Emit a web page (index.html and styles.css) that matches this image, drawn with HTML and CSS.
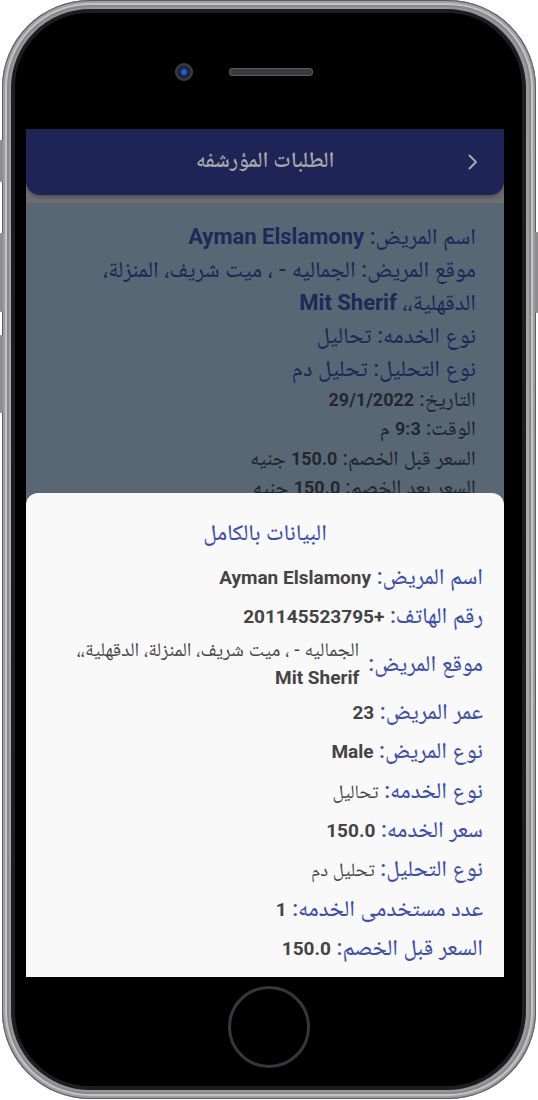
FILE: index.html
```html
<!DOCTYPE html>
<html lang="ar">
<head>
<meta charset="utf-8">
<title>الطلبات المؤرشفه</title>
<link rel="stylesheet" href="styles.css">
</head>
<body>
<div class="phone">
  <span class="side side-mute"></span>
  <span class="side side-volup"></span>
  <span class="side side-voldown"></span>
  <span class="side side-power"></span>
  <div class="bezel">
    <div class="top">
      <span class="camera"></span>
      <span class="speaker"></span>
    </div>
    <div class="screen">
      <div class="appbar-wrap">
        <header class="appbar" dir="rtl">
          <svg class="back" width="14" height="20" viewBox="0 0 14 20"><path d="M3.5 3.5 L10 10 L3.5 16.5" fill="none" stroke="currentColor" stroke-width="2" stroke-linecap="round" stroke-linejoin="round"/></svg>
          <h1 class="title">الطلبات المؤرشفه</h1>
        </header>
      </div>
      <div class="content" dir="rtl">
        <p class="row big"><span class="lbl">اسم المريض:</span> <b class="val">Ayman Elslamony</b></p>
        <p class="row big"><span class="lbl">موقع المريض:</span> الجماليه - ، ميت شريف، المنزلة،<br>الدقهلية،، <b class="val">Mit Sherif</b></p>
        <p class="row big"><span class="lbl">نوع الخدمه:</span> تحاليل</p>
        <p class="row big"><span class="lbl">نوع التحليل:</span> تحليل دم</p>
        <p class="row small">التاريخ: <b>29/1/2022</b></p>
        <p class="row small">الوقت: <b>9:3</b> م</p>
        <p class="row small">السعر قبل الخصم: <b>150.0</b> جنيه</p>
        <p class="row small">السعر بعد الخصم: <b>150.0</b> جنيه</p>
      </div>
      <section class="sheet" dir="rtl">
        <h2 class="sheet-title">البيانات بالكامل</h2>
        <p class="srow"><span class="slbl">اسم المريض:</span> <b class="sval">Ayman Elslamony</b></p>
        <p class="srow"><span class="slbl">رقم الهاتف:</span> <b class="sval">+201145523795</b></p>
        <div class="srow addr"><span class="slbl">موقع المريض:</span>
          <span class="addr-val"><span class="ar">الجماليه - ، ميت شريف، المنزلة، الدقهلية،،</span><br><b class="sval">Mit Sherif</b></span></div>
        <p class="srow"><span class="slbl">عمر المريض:</span> <b class="sval">23</b></p>
        <p class="srow"><span class="slbl">نوع المريض:</span> <b class="sval">Male</b></p>
        <p class="srow"><span class="slbl">نوع الخدمه:</span> <span class="ar">تحاليل</span></p>
        <p class="srow"><span class="slbl">سعر الخدمه:</span> <b class="sval">150.0</b></p>
        <p class="srow"><span class="slbl">نوع التحليل:</span> <span class="ar">تحليل دم</span></p>
        <p class="srow"><span class="slbl">عدد مستخدمى الخدمه:</span> <b class="sval">1</b></p>
        <p class="srow"><span class="slbl">السعر قبل الخصم:</span> <b class="sval">150.0</b></p>
      </section>
    </div>
    <div class="bottom">
      <span class="home"></span>
    </div>
  </div>
</div>
</body>
</html>
```
FILE: styles.css
```css
html, body {
  margin: 0;
  padding: 0;
  background: #ffffff;
}
body {
  width: 538px;
  height: 1100px;
  overflow: hidden;
  font-family: Roboto, "Noto Naskh Arabic", "Noto Sans Arabic", "DejaVu Sans", sans-serif;
}
.phone {
  position: relative;
  box-sizing: border-box;
  width: 534px;
  height: 1099px;
  margin-left: 2px;
  padding: 9px 10px 9px 9px;
  border-radius: 88px;
  background: linear-gradient(180deg, #97979a 0%, #aeaeb0 50%, #97979a 100%);
  box-shadow: inset 0 0 0 1px #5e5e60, inset 0 0 0 3px #9e9ea0, inset 0 0 0 5px #c4c4c6, inset 0 0 0 7px #88888a;
}
.side {
  position: absolute;
  width: 3px;
  background: #8d8d90;
  border-radius: 1px;
}
.side-mute { left: -2px; top: 140px; height: 42px; }
.side-volup { left: -2px; top: 233px; height: 79px; }
.side-voldown { left: -2px; top: 335px; height: 78px; }
.side-power { right: -2px; top: 232px; height: 81px; }
.bezel {
  box-sizing: border-box;
  height: 100%;
  border-radius: 79px;
  border: 4px solid #1e1e20;
  background: #000;
  display: flex;
  flex-direction: column;
}
.top {
  box-sizing: border-box;
  height: 116px;
  padding: 50px 0 0 160px;
  display: flex;
  align-items: flex-start;
  gap: 36px;
}
.camera {
  width: 18px;
  height: 18px;
  border-radius: 50%;
  box-sizing: border-box;
  background: radial-gradient(circle at 50% 50%, #2f5ec0 0 2px, #123a8a 3px, #0d1d3e 5px, #2a2a2c 6px, #46464a 9px);
}
.speaker {
  margin-top: 5px;
  width: 84px;
  height: 8px;
  border-radius: 4px;
  background: #3a3a3c;
  box-shadow: inset 0 0 0 1px #5a5a5e;
}
.screen {
  position: relative;
  margin-left: 11px;
  width: 478px;
  height: 848px;
  overflow: hidden;
  background: #596775;
}
.appbar-wrap {
  background: #6e6e70;
  padding-bottom: 8px;
}
.appbar {
  position: relative;
  height: 66px;
  background: #1e2455;
  border-radius: 0 0 14px 14px;
  display: flex;
  align-items: center;
  justify-content: center;
  color: #a7a7aa;
  box-shadow: 0 2px 4px rgba(0,0,0,0.3);
}
.back {
  position: absolute;
  right: 24px;
  top: 23px;
  color: #a7a7aa;
}
.title {
  margin: 0;
  font-size: 22px;
  font-weight: 600;
  font-family: "Noto Naskh Arabic", "Noto Sans Arabic", "DejaVu Sans", sans-serif;
}
.content {
  padding: 17px 28px 0 28px;
}
.row {
  margin: 0;
  white-space: nowrap;
}
.row.big {
  font-size: 22.5px;
  font-weight: 500;
  line-height: 33px;
  color: #1f2859;
}
.row.big .val {
  font-family: Roboto, sans-serif;
  font-size: 22px;
  font-weight: 700;
}
.row.small {
  font-size: 20.5px;
  font-weight: 500;
  line-height: 29.3px;
  color: #23272d;
}
.row.small b {
  font-family: Roboto, sans-serif;
  font-size: 18px;
  font-weight: 700;
}
.sheet {
  position: absolute;
  left: 0;
  right: 0;
  bottom: 0;
  height: 484px;
  box-sizing: border-box;
  padding: 20px 21px 0 21px;
  background: #f9f9f9;
  border-radius: 12px 12px 0 0;
}
.sheet-title {
  margin: 0 0 5px 0;
  text-align: center;
  font-size: 22.5px;
  line-height: 39px;
  font-weight: 500;
  color: #3d4fae;
}
.srow {
  margin: 0;
  height: 39.4px;
  line-height: 39.4px;
  font-size: 22.5px;
  font-weight: 500;
  color: #3d4fae;
  white-space: nowrap;
}
.sval {
  font-family: Roboto, sans-serif;
  font-size: 19px;
  font-weight: 700;
  color: #444;
}
.ar {
  font-size: 19px;
  font-weight: 400;
  color: #444;
}
.srow.addr {
  height: 56px;
  display: flex;
  align-items: center;
  gap: 9px;
}
.addr-val {
  display: block;
  width: 293px;
  line-height: 27px;
  margin-top: -2px;
}
.addr-val .ar {
  font-size: 19.5px;
}
.bottom {
  flex: 1;
  display: flex;
  justify-content: center;
  padding-top: 9px;
}
.home {
  width: 82px;
  height: 82px;
  box-sizing: border-box;
  border-radius: 50%;
  border: 3px solid #35373b;
  background: #000;
  margin-left: 1px;
}
```
